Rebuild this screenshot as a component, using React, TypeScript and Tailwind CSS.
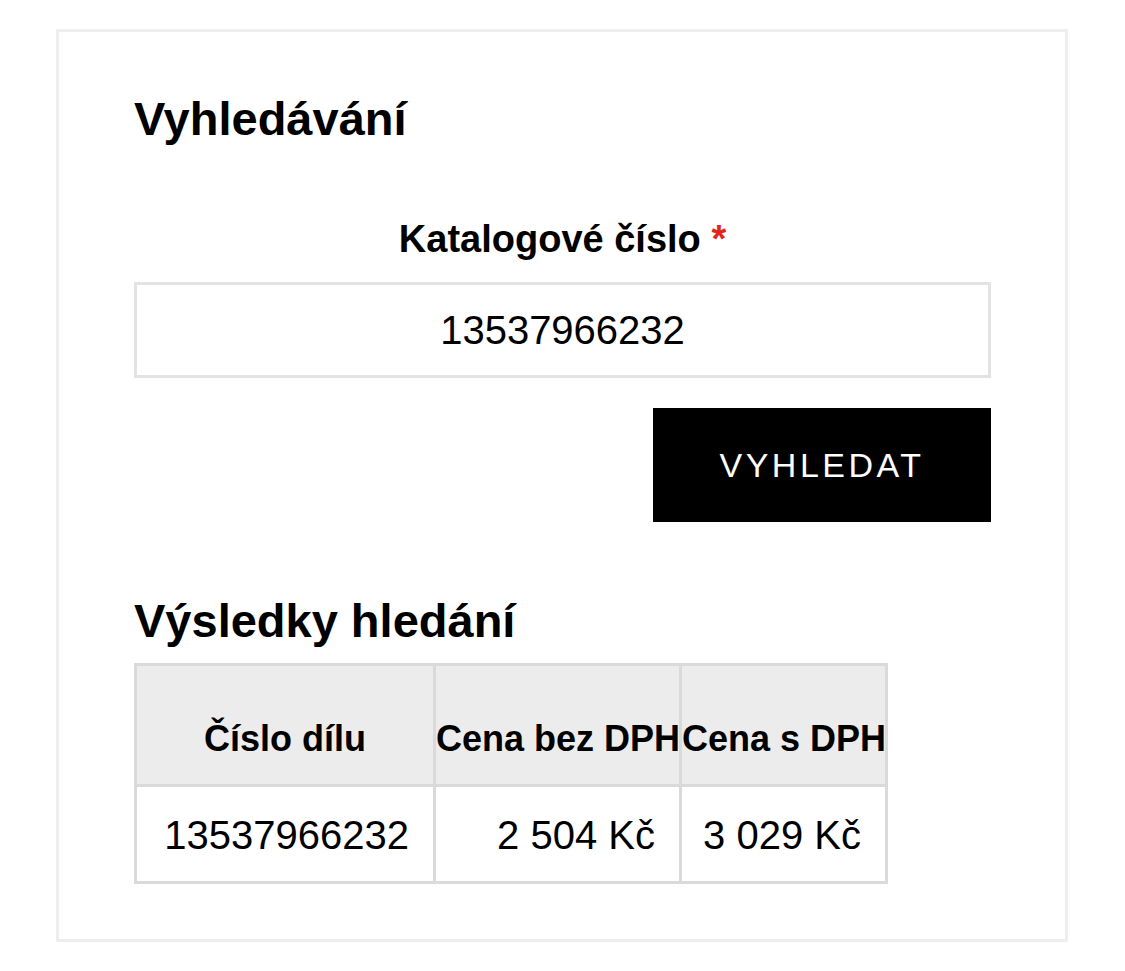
export default function App() {
  const rows = [{ part: "13537966232", net: "2 504 Kč", gross: "3 029 Kč" }];

  return (
    <div className="min-h-screen bg-white pt-[29px] pl-[56px] text-black font-['Liberation_Sans',Arial,sans-serif]">
      <div className="w-[1012px] border-[3px] border-[#eeeeee] pl-[75px] pr-[74px] pt-[60px] pb-[55px]">
        {/* Search */}
        <h1 className="text-[47px] leading-[54px] font-bold">Vyhledávání</h1>

        <label className="mt-[71px] block text-center text-[38px] leading-[44px] font-bold">
          Katalogové číslo <span className="text-[#e2261c]">*</span>
        </label>
        <input
          readOnly
          value="13537966232"
          className="mt-[21px] block h-[96px] w-full border-[3px] border-[#e3e3e3] bg-white text-center text-[40px] outline-none"
        />
        <div className="mt-[30px] flex justify-end">
          <button className="h-[114px] w-[338px] bg-black text-[34px] tracking-[3.5px] text-white">
            VYHLEDAT
          </button>
        </div>

        {/* Results */}
        <h2 className="mt-[72px] text-[47px] leading-[54px] font-bold">Výsledky hledání</h2>

        <div className="mt-[15px] grid w-fit grid-cols-[299px_246px_206px] border-l-[3px] border-t-[3px] border-[#dadada]">
          {["Číslo dílu", "Cena bez DPH", "Cena s DPH"].map((h) => (
            <div
              key={h}
              className="whitespace-nowrap border-b-[3px] border-r-[3px] border-[#dadada] bg-[#ececec] pt-[52px] pb-[24px] text-center text-[36px] leading-[42px] font-bold"
            >
              {h}
            </div>
          ))}
          {rows.map((r) =>
            [r.part, r.net, r.gross].map((v, i) => (
              <div
                key={r.part + i}
                className="whitespace-nowrap border-b-[3px] border-r-[3px] border-[#dadada] pt-[25px] pb-[23px] pr-[24px] text-right text-[40px] leading-[46px]"
              >
                {v}
              </div>
            ))
          )}
        </div>
      </div>
    </div>
  );
}
